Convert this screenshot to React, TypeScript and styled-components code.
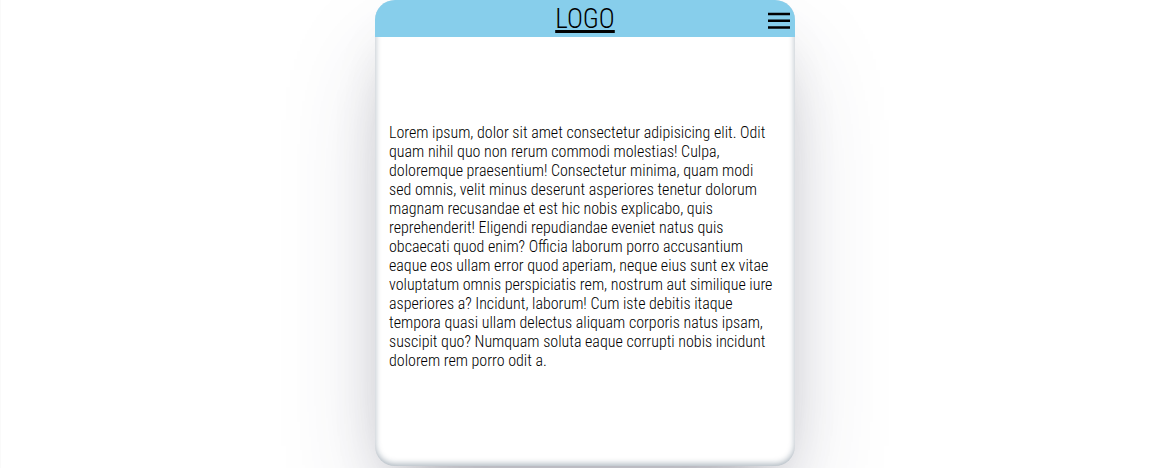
import React from "react";
import styled, { createGlobalStyle } from "styled-components";

const GlobalStyle = createGlobalStyle`
  *, *::before, *::after { box-sizing: border-box; }
  body {
    margin: 0;
    background: #fff;
    color: #000;
    font-family: "Roboto Condensed", Lato, "Liberation Sans", sans-serif;
    font-weight: 350;
  }
`;

const Page = styled.div`
  display: flex;
  justify-content: center;
  min-height: 100vh;
  padding: 0 0 2px 9px;
  border-left: 1px solid #fafafa;
`;

const Card = styled.div`
  display: flex;
  flex-direction: column;
  width: 100%;
  max-width: 420px;
  border-radius: 20px;
  overflow: hidden;
  box-shadow:
    rgba(50, 50, 93, 0.25) 0 50px 100px -20px,
    rgba(0, 0, 0, 0.3) 0 30px 60px -30px,
    rgba(10, 37, 64, 0.35) 0 -2px 6px 0 inset;
`;

const Header = styled.header`
  display: grid;
  grid-template-columns: 1fr auto 1fr;
  align-items: center;
  height: 37px;
  padding: 0 5px;
  background: skyblue;
`;

const Logo = styled.a`
  grid-column: 2;
  color: inherit;
  font-size: 27px;
  font-weight: 300;
  line-height: 36px;
  text-decoration: underline;
  text-decoration-thickness: 3px;
  text-underline-offset: 2px;
  text-decoration-skip-ink: none;
`;

const MenuButton = styled.button`
  justify-self: end;
  display: flex;
  margin-top: 4px;
  padding: 0;
  border: 0;
  background: none;
  color: inherit;
  cursor: pointer;
`;

const Content = styled.main`
  flex: 1;
  display: flex;
  align-items: center;
  padding: 14px 14px 24px;
`;

const Text = styled.p`
  margin: 0;
  font-size: 16px;
  line-height: 19px;
  white-space: pre-line;
`;

const copy = `Lorem ipsum, dolor sit amet consectetur adipisicing elit. Odit
quam nihil quo non rerum commodi molestias! Culpa,
doloremque praesentium! Consectetur minima, quam modi
sed omnis, velit minus deserunt asperiores tenetur dolorum
magnam recusandae et est hic nobis explicabo, quis
reprehenderit! Eligendi repudiandae eveniet natus quis
obcaecati quod enim? Officia laborum porro accusantium
eaque eos ullam error quod aperiam, neque eius sunt ex vitae
voluptatum omnis perspiciatis rem, nostrum aut similique iure
asperiores a? Incidunt, laborum! Cum iste debitis itaque
tempora quasi ullam delectus aliquam corporis natus ipsam,
suscipit quo? Numquam soluta eaque corrupti nobis incidunt
dolorem rem porro odit a.`;

export default function App() {
  return (
    <>
      <GlobalStyle />
      <Page>
        <Card>
          <Header>
            <Logo href="#">LOGO</Logo>
            <MenuButton type="button" aria-label="Open menu">
              <svg width="22" height="18" viewBox="0 0 22 18" aria-hidden="true">
                <path
                  d="M0 2h22M0 8.800h22M0 15.500h22"
                  stroke="currentColor"
                  strokeWidth="2.400"
                />
              </svg>
            </MenuButton>
          </Header>
          <Content>
            <Text>{copy}</Text>
          </Content>
        </Card>
      </Page>
    </>
  );
}
